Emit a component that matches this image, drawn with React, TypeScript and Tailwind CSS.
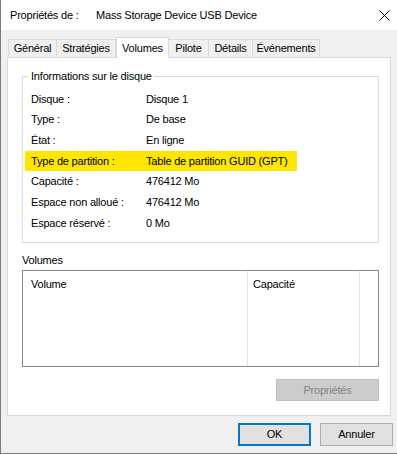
const rows: [string, string, boolean?][] = [
  ['Disque :', 'Disque 1'],
  ['Type :', 'De base'],
  ['État :', 'En ligne'],
  ['Type de partition :', 'Table de partition GUID (GPT)', true],
  ['Capacité :', '476412 Mo'],
  ['Espace non alloué :', '476412 Mo'],
  ['Espace réservé :', '0 Mo'],
];

const tabs: [string, number][] = [
  ['Général', 49],
  ['Stratégies', 60],
  ['Volumes', 53],
  ['Pilote', 41],
  ['Détails', 45],
  ['Événements', 68],
];

export default function App() {
  return (
    <div
      className="flex h-[454px] w-[397px] flex-col border-b border-l border-[#7a7a7a] bg-[#f0f0f0] text-[11px] tracking-[-0.2px] text-black"
      style={{ fontFamily: '"Liberation Sans", Arial, sans-serif' }}
    >
      {/* barre de titre */}
      <div className="flex h-[30px] shrink-0 items-center bg-white pl-[9px] pr-[7px]">
        <span className="w-[86px]">Propriétés de :</span>
        <span>Mass Storage Device USB Device</span>
        <svg className="ml-auto" width="11" height="11" viewBox="0 0 11 11">
          <path d="M0.5 0.5 L10.5 10.5 M10.5 0.5 L0.5 10.5" stroke="#000" strokeWidth="1" fill="none" />
        </svg>
      </div>

      {/* onglets */}
      <div className="mt-[7px] flex h-[20px] items-end pl-[7px]">
        {tabs.map(([name, w]) =>
          name === 'Volumes' ? (
            <div
              key={name}
              style={{ width: w }}
              className="relative z-10 -mb-px flex h-[21px] items-center justify-center border border-b-0 border-[#d9d9d9] bg-white"
            >
              {name}
            </div>
          ) : (
            <div
              key={name}
              style={{ width: w }}
              className="-ml-px flex h-[18px] items-center justify-center border border-b-0 border-[#d9d9d9] bg-[#f0f0f0] first:ml-0"
            >
              {name}
            </div>
          ),
        )}
      </div>

      {/* panneau */}
      <div className="ml-[6px] flex h-[359px] w-[384px] flex-col border border-[#d9d9d9] bg-white pl-[14px] pt-[10px]">
        <fieldset className="h-[175px] w-[357px] border border-[#dcdcdc] px-[2px]">
          <legend className="ml-[4px] px-[2px] leading-[16px]">Informations sur le disque</legend>
          <div className="mt-[4.7px] flex flex-col">
            {rows.map(([label, value, hl]) => (
              <div
                key={label}
                className={`flex h-[20.67px] w-[272px] items-center pl-[6px] ${hl ? 'bg-[#ffe600]' : ''}`}
              >
                <span className="w-[115px]">{label}</span>
                <span>{value}</span>
              </div>
            ))}
          </div>
        </fieldset>

        <div className="mt-[9px] leading-[16px]">Volumes</div>
        <div className="mt-[2px] flex h-[97px] w-[357px] border border-[#828790] bg-white">
          <div className="w-[225px] border-r border-[#e5e5e5] pl-[8px] pt-[5px]">Volume</div>
          <div className="w-[112px] border-r border-[#e5e5e5] pl-[5px] pt-[5px]">Capacité</div>
        </div>

        <div className="mt-[12px] flex w-[357px] justify-end">
          <button
            type="button"
            disabled
            className="h-[22px] w-[103px] border border-[#bfbfbf] bg-[#cccccc] text-[#838383]"
          >
            Propriétés
          </button>
        </div>
      </div>

      {/* boutons */}
      <div className="mt-[7px] flex justify-end gap-[9px] pr-[4px]">
        <button type="button" className="h-[23px] w-[73px] border-2 border-[#0078d7] bg-[#e1e1e1]">
          OK
        </button>
        <button type="button" className="h-[23px] w-[73px] border border-[#adadad] bg-[#e1e1e1]">
          Annuler
        </button>
      </div>
    </div>
  );
}
